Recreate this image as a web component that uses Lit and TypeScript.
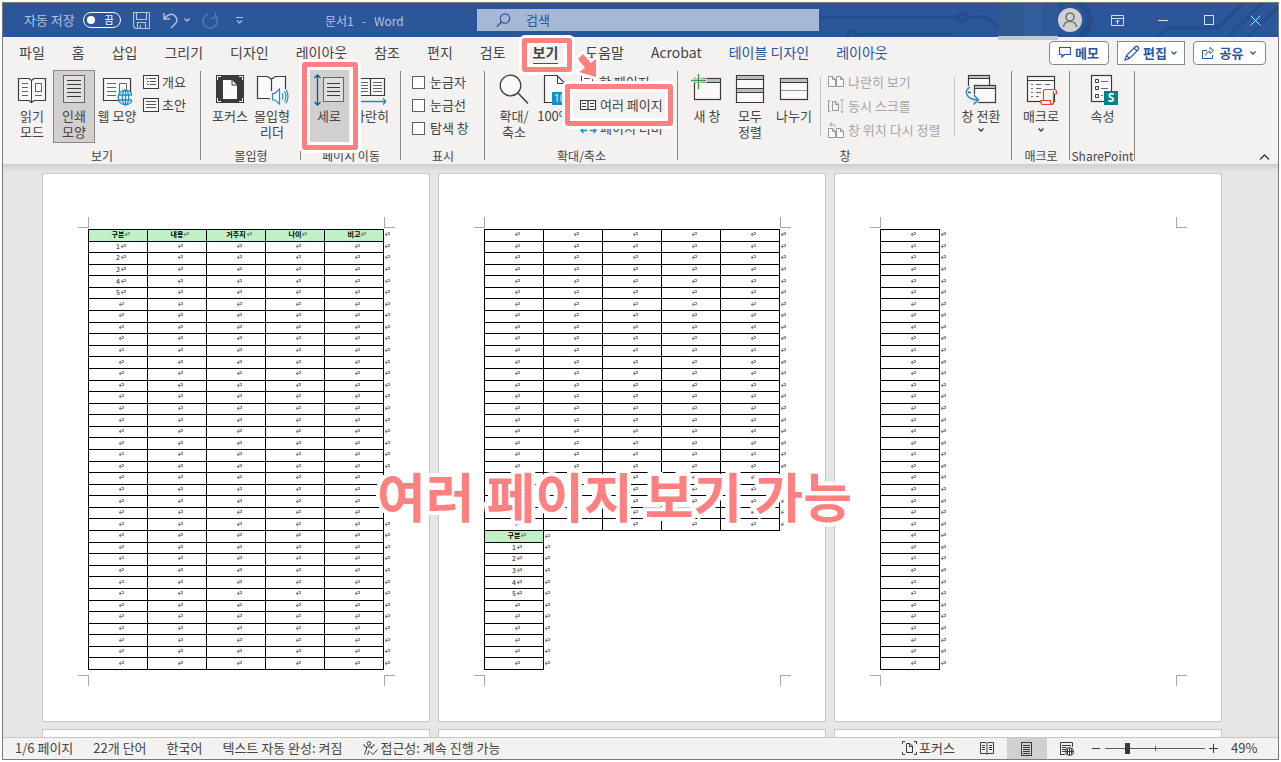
import { LitElement, html, css, svg, nothing, TemplateResult } from "lit";
import { customElement, property, state } from "lit/decorators.js";
import { classMap } from "lit/directives/class-map.js";

const icon = (w: number, h: number, body: unknown) =>
  html`<svg width=${w} height=${h} viewBox="0 0 ${w} ${h}" fill="none" stroke="#3b3a39" stroke-width="1" aria-hidden="true">${body}</svg>`;

const hLines = (x1: number, x2: number, ys: number[], color = "#3b3a39") =>
  ys.map((y) => svg`<path d="M${x1} ${y}H${x2}" stroke=${color}/>`);

const chevron = (color = "#3b3a39") => icon(8, 6, svg`<path d="M1.5 1.5L4 4L6.5 1.5" stroke=${color} stroke-width="1.3"/>`);

const openBook = svg`
  <path d="M1.5 4.500H12L14.500 6.500L17 4.500H28.500V26.500H17L14.500 28.500L12 26.500H1.500Z" fill="#fafafa" stroke-width="1.200"/>
  <path d="M14.500 6V28"/>`;

const icons = {
  read: icon(30, 32, svg`${openBook}${hLines(5, 11, [9.5, 13.5, 17.5, 21.5], "#666")}<rect x="18.500" y="9.500" width="6" height="8" stroke="#666"/>${hLines(18, 25, [21.5], "#666")}`),
  print: icon(32, 32, svg`<rect x="5.500" y="1.500" width="21" height="27" fill="#e0e0e0" stroke="#666"/>${hLines(9, 23, [6.5, 10.5, 14.5, 18.5, 22.5])}`),
  web: icon(30, 32, svg`<path d="M1.500 4.500H28.500V26.500H1.500Z" fill="#fafafa" stroke-width="1.200"/>${hLines(5, 14, [9.5, 13.500, 17.5, 21.5], "#666")}<path d="M17.500 22V9.500H24.500V16" stroke="#666"/>
    <g stroke="#1e8bcd" stroke-width="1.300"><circle cx="23.500" cy="23.500" r="7.300" fill="#fff"/><ellipse cx="23.500" cy="23.500" rx="3.200" ry="7.300"/><path d="M23.500 16V31M16 21H31M16 26H31"/></g>`),
  outline: icon(16, 14, svg`<rect x=".5" y=".5" width="15" height="13" fill="#fafafa"/><path d="M3 3.500h2M6 3.500h7M4 6.500h2M7 6.500h6M4 9.500h2M7 9.500h6" stroke="#555"/>`),
  draft: icon(16, 14, svg`<rect x=".5" y=".5" width="15" height="13" fill="#fafafa"/>${hLines(3, 13, [3.5, 6.5, 9.5], "#555")}`),
  focus: icon(32, 32, svg`<rect x="2" y="1" width="28" height="28" fill="#3b3a39" stroke="none"/><path d="M9 6H18L23 11V25H9Z" fill="#fafafa" stroke="none"/><path d="M18 6V11H23" /><path d="M3.500 6V2.500H7M25 2.500H28.500V6M28.500 24V27.500H25M7 27.500H3.500V24" stroke="#fff"/>`),
  reader: icon(34, 32, svg`<path d="M15 25L13 24.500H2.500V2.500H12.500L16.500 5L20.500 2.500H30.500V15M16.500 5V17" fill="#fafafa" stroke-width="1.200"/>
    <path d="M24.500 15V30L20 26H17.500V19.500H20Z" fill="#fff" stroke="#1e8bcd" stroke-width="1.200"/><path d="M27 19.500Q29 22.500 27 25.500M29.500 17.500Q32.500 22.500 29.500 27.500M31 15.500Q35 22.500 31 29.500" stroke="#1e8bcd" stroke-width="1.100"/>`),
  vertical: icon(32, 34, svg`<path d="M4.500 1V31M1.500 4L4.500 1L7.500 4M1.500 28L4.500 31L7.500 28" stroke="#0a5ea8" stroke-width="1.400"/><rect x="10.500" y="3.500" width="20" height="24" fill="#e0e0e0" stroke="#666"/>${hLines(14, 27, [9.5, 13.5, 17.5, 21.5])}`),
  side: icon(30, 34, svg`<path d="M1.500 4.500H28.500V21.500H1.500ZM14.500 4.500V21.500" fill="#fafafa" stroke-width="1.200"/>${hLines(4, 12, [8.5, 11.5, 14.5, 17.5], "#666")}${hLines(17, 26, [8.5, 11.5, 14.5, 17.5], "#666")}<path d="M1 27.500H30M27 24.500L30 27.500L27 30.500" stroke="#1e8bcd" stroke-width="1.300"/>`),
  zoom: icon(32, 32, svg`<circle cx="12.500" cy="11.500" r="10.300" fill="#fafafa" stroke-width="1.200"/><path d="M20 19L30 29.500" stroke-width="1.400"/>`),
  hundred: icon(32, 32, svg`<path d="M6.500 28.500V1.500H19L27.500 10V28.500Z" fill="#fafafa" stroke-width="1.200"/><path d="M19.500 1.500V9.500H27" /><rect x="14" y="18" width="18" height="13" fill="#1e8bcd" stroke="none"/><text x="16" y="28" font-size="10" fill="#fff" stroke="none" font-family="Open Sans, sans-serif">100</text>`),
  onePage: icon(16, 14, svg`<rect x="1.500" y=".5" width="11" height="13" fill="#fafafa"/>${hLines(4, 10, [3.5, 6.5, 9.5], "#555")}`),
  multiPage: icon(17, 12, svg`<path d="M.5 1.500H15.500V10.500H.5ZM8 1.500V10.500" fill="#fafafa" stroke-width="1.200"/>${hLines(2, 6, [4.5, 7.5])}${hLines(10, 14, [4.5, 7.5])}`),
  pageWidth: icon(17, 14, svg`<path d="M1 9.500H7M3.500 7L1 9.500L3.500 12M10 9.500H16M13.500 7L16 9.500L13.500 12" stroke="#1e8bcd" stroke-width="1.300"/><path d="M4.500 5V.5H12.500V5"/>`),
  newWindow: icon(34, 32, svg`<rect x="4.500" y="4.500" width="26" height="21" fill="#fafafa" stroke-width="1.200"/><rect x="5" y="5" width="25" height="3" fill="#bdbdbd" stroke="none"/><path d="M5 8.500H30"/><path d="M8.500 -1V16M1 6.500H17" stroke="#f3f2f1" stroke-width="4"/><path d="M8.500 0V15M1 6.500H16" stroke="#2ea04a" stroke-width="1.400"/>`),
  arrange: icon(30, 32, svg`<path d="M1.500 1.500H28.500V28.500H1.500Z" fill="#fafafa" stroke-width="1.200"/><path d="M2 2H28V5H2ZM2 15H28V18H2Z" fill="#bdbdbd" stroke="none"/>${hLines(1, 29, [5.5, 14.5, 18.5])}`),
  split: icon(30, 32, svg`<rect x="1.500" y="4.500" width="27" height="21" fill="#fafafa" stroke-width="1.200"/><rect x="2" y="5" width="26" height="3" fill="#bdbdbd" stroke="none"/>${hLines(2, 28, [8.5])}${hLines(2, 28, [16.5], "#999")}`),
  sideBySide: icon(17, 14, svg`<path d="M.5 1.500H4.500L7.500 4.500V11.500H.5ZM8.500 1.500H12.500L15.500 4.500V11.500H8.500ZM4.500 1.500V4.500H7.500M12.500 1.500V4.500H15.500" stroke="#999" fill="#fafafa"/>`),
  syncScroll: icon(17, 16, svg`<path d="M2.500 2.500H.5V13.500H2.500M4.500 3.500H8L10.500 6V12.500H4.500ZM7.500 3.500V6.500H10" stroke="#999"/><path d="M14 1V15M12 3L14 1L16 3M12 13L14 15L16 13" stroke="#b5b5b5"/>`),
  resetWindow: icon(17, 16, svg`<path d="M.5 6.500H4.500L7.500 9.500V15.500H.5ZM8.500 6.500H12.500L15.500 9.500V15.500H8.500ZM4.500 6.500V9.500H7.500M12.500 6.500V9.500H15.500" stroke="#999" fill="#fafafa"/><path d="M4 .5L1.500 2.500L4 4.500M1.500 2.500H5Q7.500 2.500 7.500 5" stroke="#aaa"/>`),
  switchWindow: icon(32, 32, svg`<rect x="3.500" y="1.500" width="21" height="17" fill="#fafafa" stroke-width="1.200"/><rect x="4" y="2" width="20" height="2" fill="#bdbdbd" stroke="none"/>${hLines(3, 25, [4.5])}
    <rect x="6" y="9" width="10" height="21" fill="#f3f2f1" stroke="none"/><rect x="9.500" y="11.500" width="21" height="17" fill="#fafafa" stroke-width="1.200"/><rect x="10" y="12" width="20" height="2" fill="#bdbdbd" stroke="none"/>${hLines(9, 31, [14.5])}
    <path d="M5 13C-1 17 0 25 13 26M9 20.500L13.500 26L8.500 31" stroke="#f3f2f1" stroke-width="3.500"/><path d="M5 13C-1 17 0 25 13 26M9 21L13.500 26L8.500 30.500" stroke="#1e8bcd" stroke-width="1.400"/>`),
  macro: icon(32, 32, svg`<rect x="2.500" y="2.500" width="27" height="25" fill="#fafafa" stroke-width="1.200"/>${hLines(3, 29, [6.5])}<path d="M6 10.500H8M6 14.500H8M6 18.500H8M6 22.500H8M11 10.500H16M20 10.500H25M11 14.500H16M11 18.500H16M11 22.500H14" stroke="#666"/>
    <path d="M19.500 15.500H29.500Q31.500 15.500 31.500 18V20H28.500V28.500Q28.500 30.500 26.500 30.500H17.500Q16 30.500 16 28V26.500H25.500V28.500Q25.500 30.500 27 30.500M18.500 26.500V17Q18.500 15.500 20 15.500M28.500 20V17" fill="#f7f3f2" stroke="#e8403a" stroke-width="1.200"/>`),
  props: icon(32, 32, svg`<rect x="4.500" y="1.500" width="20" height="26" fill="#fafafa" stroke-width="1.200"/><path d="M8.500 5.500h3v3h-3zM8.500 12.500h3v3h-3zM8.500 20.500h3v3h-3z" /><path d="M14 7.500H21M14 14.500H21M14 21.500H16" stroke="#666"/><rect x="17" y="17" width="14" height="14" fill="#038387" stroke="none"/><text x="24" y="28" text-anchor="middle" font-size="12" font-weight="700" fill="#fff" stroke="none" font-family="Open Sans, sans-serif">S</text>`),
};

type Big = { icon: TemplateResult; lines: string[]; size?: string; on?: boolean; menu?: boolean };

@customElement("ribbon-button")
class RibbonButton extends LitElement {
  @property({ attribute: false }) item!: Big;
  static styles = css`
    :host { display: flex; }
    button { all: unset; box-sizing: border-box; display: flex; flex-direction: column; align-items: center; gap: 2px; height: 73px; padding-top: 4px; white-space: nowrap; text-align: center; width: 42px; line-height: 16px; }
    .wide { width: 44px; }
    .slim { width: 40px; }
    .narrow { width: 38px; }
    .broad { width: 52px; }
    .icon { height: 32px; display: flex; }
    .on { background: #d2d0ce; box-shadow: inset 0 0 0 1px #8a8886; }
    .flat { background: #d2d0ce; }
    .row { display: block; }
    .chev { display: flex; justify-content: center; align-items: center; height: 12px; }
  `;
  render() {
    const { icon: pic, lines, size, on, menu } = this.item;
    return html`<button class=${classMap({ [size ?? "base"]: true, on: !!on && size !== "slim", flat: !!on && size === "slim" })} aria-pressed=${on ? "true" : "false"}>
      <span class="icon">${pic}</span>
      <span>${lines.map((l) => html`<span class="row">${l}</span>`)}${menu ? html`<span class="chev">${chevron()}</span>` : nothing}</span>
    </button>`;
  }
}

@customElement("doc-page")
class DocPage extends LitElement {
  @property({ type: Number }) full = 0;
  @property({ type: Number }) rows = 38;
  @property({ type: Number }) head = -1;
  static styles = css`
    :host { display: block; box-sizing: border-box; width: 388px; border: 1px solid #c6c6c6; background: #fff; padding: 53px 44px 45px 45px; }
    .body { position: relative; height: 449px; padding-top: 2px; box-sizing: border-box; }
    .corner { position: absolute; box-sizing: border-box; width: 11px; height: 11px; border: 0 solid #a6a6a6; }
    .tl { left: -10px; top: -10px; border-width: 0 1px 1px 0; }
    .tr { right: -10px; top: -10px; border-width: 0 0 1px 1px; }
    .bl { left: -10px; bottom: -10px; border-width: 1px 1px 0 0; }
    .br { right: -10px; bottom: -10px; border-width: 1px 0 0 1px; }
    table { border-collapse: collapse; table-layout: fixed; height: 441px; font-size: 7px; line-height: 8px; color: #222; }
    .col { width: 59px; }
    .end { width: 11px; }
    td, th { padding: 0 0 2px; text-align: center; border: 1px solid #000; }
    th { background: #c0f0c6; color: #000; font-weight: 700; }
    .out { border: none; text-align: left; }
    .mark { display: inline-block; width: 6px; height: 6px; margin-right: -6px; vertical-align: top; margin-top: 1px; }
    .mark path { fill: none; stroke: #7c7c7c; stroke-width: 0.9; }
  `;
  private mark = () => html`<svg class="mark" viewBox="0 0 6 6" aria-hidden="true"><path d="M3.500 1.500H5.500V3.500H1M3 2L1 3.500L3 5"/></svg>`;
  render() {
    const names = ["구분", "내용", "거주지", "나이", "비고"];
    const trs = Array.from({ length: this.rows }, (_, r) => {
      const n = r < this.full ? 5 : 1;
      const k = this.head < 0 ? -1 : r - this.head;
      return html`<tr>${names.slice(0, n).map((name, c) =>
        k === 0 ? html`<th scope="col">${name}${this.mark()}</th>` : html`<td>${c === 0 && k > 0 && k < 6 ? k : ""}${this.mark()}</td>`
      )}<td class="out">${this.mark()}</td></tr>`;
    });
    const cols = this.full ? 5 : 1;
    return html`<div class="body">
      <span class="corner tl"></span><span class="corner tr"></span><span class="corner bl"></span><span class="corner br"></span>
      ${this.rows ? html`<table style="width:${cols * 59 + 12}px"><colgroup>${names.slice(0, cols).map(() => html`<col class="col">`)}<col class="end"></colgroup><tbody>${trs}</tbody></table>` : nothing}
    </div>`;
  }
}

@customElement("app-root")
class AppRoot extends LitElement {
  @state() private tab = 9;

  static styles = css`
    :host { display: block; position: relative; box-sizing: border-box; height: 100vh; padding: 2px; background: #fff; overflow: hidden; color: #444; font: 13px/16px "Noto Sans CJK KR", sans-serif; }
    * { box-sizing: border-box; }
    button { all: unset; box-sizing: border-box; }
    svg { display: block; flex: none; }
    .window { display: flex; flex-direction: column; height: 100%; border: 1px solid #7a7a7a; }

    .title { position: relative; display: grid; grid-template-columns: 322px 152px minmax(200px, 342px) 1fr; align-items: center; height: 34px; flex: none; background: #2b579a; color: #b3c4de; }
    .circuit { position: absolute; right: 0; top: 0; }
    .quick { display: flex; align-items: center; padding-left: 21px; white-space: nowrap; }
    .toggle { display: flex; align-items: center; justify-content: space-between; width: 38px; height: 16px; margin: 0 12px 0 8px; padding: 0 6px 0 3px; border: 1px solid #fff; border-radius: 8px; color: #fff; font-size: 10px; line-height: 12px; }
    .knob { width: 8px; height: 8px; border-radius: 50%; background: #fff; }
    .quick .undo { margin-left: 12px; }
    .quick .drop { margin: 0 11px 0 4px; }
    .quick .more { margin-left: 16px; }
    .name { display: flex; gap: 8px; font-size: 12px; padding-top: 2px; }
    .search { position: relative; display: flex; align-items: center; gap: 15px; height: 22px; padding-left: 19px; background: #a5b8d5; color: #2b579a; }
    .search input { all: unset; flex: 1; min-width: 0; color: #2b579a; }
    .search input::placeholder { color: #2b579a; opacity: 1; }
    .sys { position: relative; display: flex; justify-content: flex-end; align-items: center; height: 34px; }
    .account { align-self: flex-start; width: 60px; height: 37px; background: linear-gradient(90deg, #2f5893 0 26px, #325d9c 26px 44px, #2d5998 44px); border-bottom: 4px solid #bfc9de; }
    .avatar { display: flex; width: 24px; height: 24px; margin-right: 12px; border-radius: 50%; background: #d0d0d0; }
    .sysbtn { display: flex; justify-content: center; width: 46px; }

    .tabs { display: flex; align-items: center; height: 31px; flex: none; padding: 0 12px 0 16px; background: #f3f2f1; font-size: 14px; line-height: 18px; white-space: nowrap; }
    .tablist { display: flex; gap: 27px; flex: 1; }
    .tab { padding: 3px 0 2px; border-bottom: 2px solid transparent; }
    .tab.on { font-weight: 700; border-color: #2b579a; }
    .tab.context { color: #2b579a; }
    .actions { display: flex; gap: 8px; color: #2b579a; font-size: 13px; font-weight: 700; }
    .action { display: flex; align-items: center; justify-content: center; gap: 4px; height: 24px; border: 1px solid #8a8886; background: #fff; }
    .memo { width: 60px; border-radius: 4px; }
    .edit { width: 68px; gap: 3px; }
    .share { width: 73px; border-radius: 4px; gap: 6px; }

    .ribbon { position: relative; display: flex; height: 96px; flex: none; padding-top: 2px; background: #f3f2f1; }
    .group { position: relative; display: flex; flex-direction: column; flex: none; padding-left: 8px; }
    .group::after { content: ""; position: absolute; right: 0; top: 1px; height: 89px; width: 1px; background: #8a8886; }
    .g-view { width: 198px; } .g-read { width: 100px; } .g-move { width: 100px; } .g-show { width: 84px; }
    .g-zoom { width: 193px; } .g-win { width: 334px; } .g-macro { width: 58px; } .g-sp { width: 65px; }
    .g-macro, .g-sp { padding-left: 0; align-items: center; }
    .items { display: flex; height: 78px; }
    .label { align-self: stretch; margin-left: -8px; text-align: center; font-size: 12px; line-height: 16px; white-space: nowrap; }
    .g-macro .label, .g-sp .label { margin-left: 0; }
    .col { display: flex; flex-direction: column; gap: 7px; padding-top: 4px; }
    .small { display: flex; align-items: center; gap: 3px; height: 16px; white-space: nowrap; }
    .off { color: #a6a6a6; }
    .g-view .col { padding-left: 4px; }
    .g-zoom .col { padding-left: 7px; }
    .g-show .col { padding-left: 3px; }
    .g-win .rule { width: 1px; height: 60px; margin-top: 7px; background: #c8c6c4; }
    .g-win .first { margin-left: 4px; }
    .g-win .col { padding-left: 7px; gap: 8px; width: 133px; }
    .check { gap: 5px; }
    .check input { appearance: none; width: 13px; height: 13px; margin: 0; border: 1px solid #605e5c; background: #fff; }
    .collapse { position: absolute; right: 8px; bottom: 3px; }

    .canvas { flex: 1; min-height: 0; overflow: hidden; display: grid; grid-template-columns: repeat(3, 388px); gap: 7px 8px; justify-content: center; align-content: start; padding: 9px 17px 0 0; background: linear-gradient(#cfcfcf, #e6e6e6 8px); }

    .status { display: flex; align-items: center; height: 22px; flex: none; border-top: 1px solid #c6c6c6; background: #f3f2f1; padding: 0 21px 0 12px; white-space: nowrap; font-size: 13px; }
    .facts { display: flex; gap: 20px; flex: 1; }
    .facts, .focus, .percent { padding-bottom: 1px; }
    .with-icon { display: flex; align-items: center; gap: 2px; }
    .view { display: flex; align-items: center; justify-content: center; width: 40px; height: 21px; }
    .view.on { background: #d2d0ce; }
    .focus { margin-right: 12px; }
    .zoomer { display: flex; align-items: center; gap: 4px; padding-left: 5px; }
    .zoomer input { appearance: none; width: 100px; height: 11px; margin: 0; background: linear-gradient(#605e5c, #605e5c) 0 5px / 100% 1px no-repeat, linear-gradient(#605e5c, #605e5c) 50px 3px / 1px 5px no-repeat; }
    .zoomer input::-webkit-slider-thumb { appearance: none; width: 5px; height: 11px; background: #3b3a39; }
    .percent { margin-left: 9px; width: 26px; }

    .callout { position: absolute; border: 5px solid #ff8080; border-radius: 3px; box-shadow: 0 0 0 3px #fff, inset 0 0 0 3px #fff; pointer-events: none; }
    .c-tab { left: 522px; top: 38px; width: 50px; height: 34px; }
    .c-vertical { left: 302px; top: 62px; width: 56px; height: 88px; }
    .c-multi { left: 565px; top: 84px; width: 108px; height: 42px; }
    .arrow { position: absolute; left: 570px; top: 46px; pointer-events: none; }
    .caption { position: absolute; left: 377px; top: 460px; font-size: 53px; line-height: 70px; font-weight: 700; color: #ff8080; white-space: nowrap; -webkit-text-stroke: 8px #fff; paint-order: stroke fill; pointer-events: none; }
  `;

  private small(pic: TemplateResult, text: string, off = false) {
    return html`<button class=${classMap({ small: true, off })} ?disabled=${off}>${pic}<span>${text}</span></button>`;
  }

  private group(cls: string, label: string, content: unknown) {
    return html`<section class="group ${cls}" aria-label=${label}><div class="items">${content}</div><div class="label">${label}</div></section>`;
  }

  private big(...items: Big[]) {
    return items.map((i) => html`<ribbon-button .item=${i}></ribbon-button>`);
  }

  private titleBar() {
    const c = "#b3c4de";
    return html`<header class="title">
      <svg class="circuit" width="460" height="34" fill="none" stroke="#254d8a" stroke-width="3" aria-hidden="true">
        <path d="M0 14H141M149 14H162Q170 14 178 22L184 28M38 31H135"/><circle cx="145" cy="14" r="4"/><circle cx="34" cy="32" r="4"/>
        <circle cx="251" cy="17" r="20" stroke-width="7"/><path d="M340 34L350 25H400L425 0M410 34L444 0M430 34L462 2"/>
      </svg>
      <div class="quick">
        <span>자동 저장</span>
        <button class="toggle" role="switch" aria-checked="false" aria-label="자동 저장"><span class="knob"></span><span>끔</span></button>
        ${icon(17, 17, svg`<path d="M.5 .5H16.500V16.500H2.500L.5 14.500ZM3.500 .5V7.500H13.500V.5M4.500 16V10.500H12.500V16M7.500 13V16" stroke=${c} stroke-width="1.200"/>`)}
        <span class="undo">${icon(17, 17, svg`<path d="M2 1V7H8M2 7C6 2 10 1 13 4C16 7 15 10 13 12L9 16" stroke=${c} stroke-width="1.400"/>`)}</span>
        <span class="drop">${chevron(c)}</span>
        ${icon(17, 17, svg`<path d="M13.500 1V6M13.500 6H9M13 3.500A7.200 7.200 0 1 1 6 2" stroke="#557bb4" stroke-width="1.400"/>`)}
        <span class="more">${icon(9, 9, svg`<path d="M1 1.500H8M2 4.500L4.500 7L7 4.500" stroke=${c} stroke-width="1.200"/>`)}</span>
      </div>
      <div class="name"><span>문서1</span><span>-</span><span>Word</span></div>
      <label class="search">${icon(15, 15, svg`<circle cx="9" cy="5.500" r="4.700" stroke="#2b579a" stroke-width="1.200"/><path d="M5.500 9L.8 13.800" stroke="#2b579a" stroke-width="1.300"/>`)}<input type="text" placeholder="검색" aria-label="검색"></label>
      <div class="sys">
        <span class="account"></span>
        <button class="avatar" aria-label="계정">${icon(24, 24, svg`<circle cx="12" cy="9" r="4" stroke="#555" stroke-width="1.200"/><path d="M5.500 19Q6 13.500 12 13.500Q18 13.500 18.500 19" stroke="#555" stroke-width="1.200"/>`)}</button>
        <button class="sysbtn" aria-label="리본 표시 옵션">${icon(13, 11, svg`<path d="M.5 .5H12.500V10.500H.5ZM.5 3.500H12.500M6.500 9V5M4.500 7L6.500 5L8.500 7" stroke="#d5deec"/>`)}</button>
        <button class="sysbtn" aria-label="최소화">${icon(11, 11, svg`<path d="M0 5.500H10" stroke="#d5deec"/>`)}</button>
        <button class="sysbtn" aria-label="최대화">${icon(11, 11, svg`<rect x=".5" y=".5" width="9" height="9" stroke="#d5deec"/>`)}</button>
        <button class="sysbtn" aria-label="닫기">${icon(11, 11, svg`<path d="M.5 .5L10.500 10.500M10.500 .5L.5 10.500" stroke="#d5deec"/>`)}</button>
      </div>
    </header>`;
  }

  private tabRow() {
    const names = ["파일", "홈", "삽입", "그리기", "디자인", "레이아웃", "참조", "편지", "검토", "보기", "도움말", "Acrobat", "테이블 디자인", "레이아웃"];
    const b = "#2b579a";
    return html`<nav class="tabs">
      <div class="tablist" role="tablist">${names.map((n, i) => html`<button role="tab" aria-selected=${i === this.tab ? "true" : "false"} class=${classMap({ tab: true, on: i === this.tab, context: i > 11 })} @click=${() => (this.tab = i)}>${n}</button>`)}</div>
      <div class="actions">
        <button class="action memo">${icon(12, 11, svg`<path d="M.5 .5H11.500V7.500H5.500L3 10V7.500H.5Z" stroke=${b} stroke-width="1.200"/>`)}메모</button>
        <button class="action edit">${icon(16, 16, svg`<path d="M1 15L2.500 10.500L11 2Q12.500 .5 14 2Q15.500 3.500 14 5L5.500 13.500ZM2.500 10.500L5.500 13.500M10 3L13 6" stroke=${b} stroke-width="1.200"/>`)}편집${chevron(b)}</button>
        <button class="action share">${icon(12, 12, svg`<path d="M5 3.500H.5V11.500H10.500V8M3.500 8.500Q4 4.500 8 4.500V6.500L11.500 3.500L8 .5V2.500" stroke=${b}/>`)}공유 ${chevron(b)}</button>
      </div>
    </nav>`;
  }

  private ribbon() {
    return html`<div class="ribbon">
      ${this.group("g-view", "보기", html`
        ${this.big({ icon: icons.read, lines: ["읽기", "모드"] }, { icon: icons.print, lines: ["인쇄", "모양"], on: true }, { icon: icons.web, lines: ["웹 모양"], size: "wide" })}
        <div class="col">${this.small(icons.outline, "개요")}${this.small(icons.draft, "초안")}</div>`)}
      ${this.group("g-read", "몰입형", this.big({ icon: icons.focus, lines: ["포커스"] }, { icon: icons.reader, lines: ["몰입형", "리더"] }))}
      ${this.group("g-move", "페이지 이동", this.big({ icon: icons.vertical, lines: ["세로"], size: "slim", on: true }, { icon: icons.side, lines: ["나란히"], size: "wide" }))}
      ${this.group("g-show", "표시", html`<div class="col">${["눈금자", "눈금선", "탐색 창"].map((t) => html`<label class="small check"><input type="checkbox">${t}</label>`)}</div>`)}
      ${this.group("g-zoom", "확대/축소", html`
        ${this.big({ icon: icons.zoom, lines: ["확대/", "축소"] }, { icon: icons.hundred, lines: ["100%"], size: "narrow" })}
        <div class="col">${this.small(icons.onePage, "한 페이지")}${this.small(icons.multiPage, "여러 페이지")}${this.small(icons.pageWidth, "페이지 너비")}</div>`)}
      ${this.group("g-win", "창", html`
        ${this.big({ icon: icons.newWindow, lines: ["새 창"] }, { icon: icons.arrange, lines: ["모두", "정렬"], size: "wide" }, { icon: icons.split, lines: ["나누기"], size: "wide" })}
        <span class="rule first"></span>
        <div class="col">${this.small(icons.sideBySide, "나란히 보기", true)}${this.small(icons.syncScroll, "동시 스크롤", true)}${this.small(icons.resetWindow, "창 위치 다시 정렬", true)}</div>
        <span class="rule"></span>
        ${this.big({ icon: icons.switchWindow, lines: ["창 전환"], size: "broad", menu: true })}`)}
      ${this.group("g-macro", "매크로", this.big({ icon: icons.macro, lines: ["매크로"], menu: true }))}
      ${this.group("g-sp", "SharePoint", this.big({ icon: icons.props, lines: ["속성"] }))}
      <button class="collapse" aria-label="리본 메뉴 축소">${icon(11, 8, svg`<path d="M1 6.500L5.500 2L10 6.500" stroke-width="1.300"/>`)}</button>
    </div>`;
  }

  private statusBar() {
    return html`<footer class="status">
      <div class="facts">
        <span>1/6 페이지</span><span>22개 단어</span><span>한국어</span><span>텍스트 자동 완성: 켜짐</span>
        <span class="with-icon">${icon(16, 15, svg`<circle cx="7" cy="2.500" r="1.800"/><path d="M2 3Q1 5 4.500 6V8L2.500 13.500M12 3Q13 5 9.500 6V8M4.500 6H9.500M7 9.500L5.500 14M8 10.500L11 13.500L15.500 8.500"/>`)}접근성: 계속 진행 가능</span>
      </div>
      <button class="with-icon focus">${icon(15, 14, svg`<path d="M3 .5H.5V3M.5 11V13.500H3M12 .5H14.500V3M14.500 11V13.500H12M4.500 2.500H8L10.500 5V11.500H4.500ZM7.500 2.500V5.500H10.500"/>`)}포커스</button>
      <button class="view" aria-label="읽기 모드">${icon(14, 13, svg`<path d="M.5 .5H6L7 1.500L8 .5H13.500V11.500H8L7 12.500L6 11.500H.5ZM7 1.500V12.500"/>${hLines(2, 5, [3.5, 5.5, 7.5])}${hLines(9, 12, [3.5, 5.5, 7.5])}`)}</button>
      <button class="view on" aria-label="인쇄 모양">${icon(12, 14, svg`<rect x=".5" y=".5" width="10" height="13"/>${hLines(2, 9, [3.5, 5.5, 7.5, 9.5, 11.5])}`)}</button>
      <button class="view" aria-label="웹 모양">${icon(14, 14, svg`<path d="M.5 13V.5H12.500V5M0 12.500H5"/>${hLines(2, 11, [3.5])}${hLines(2, 6, [5.5, 7.5, 9.5])}<circle cx="9.500" cy="9.500" r="4"/><path d="M5.500 9.500H13.500M9.500 5.500V13.500M7.500 6.500V12.500M11.500 6.500V12.500"/>`)}</button>
      <div class="zoomer">
        <button aria-label="축소">${icon(9, 9, svg`<path d="M0 4.500H8"/>`)}</button>
        <input type="range" min="0" max="100" value="21" aria-label="확대/축소">
        <button aria-label="확대">${icon(9, 9, svg`<path d="M0 4.500H9M4.500 0V9"/>`)}</button>
        <span class="percent">49%</span>
      </div>
    </footer>`;
  }

  render() {
    return html`<div class="window">
        ${this.titleBar()}${this.tabRow()}${this.ribbon()}
        <main class="canvas">
          <doc-page .full=${38} .head=${0}></doc-page>
          <doc-page .full=${26} .head=${26}></doc-page>
          <doc-page></doc-page>
          <doc-page .rows=${0}></doc-page><doc-page .rows=${0}></doc-page><doc-page .rows=${0}></doc-page>
        </main>
        ${this.statusBar()}
      </div>
      <div class="callout c-vertical"></div>
      <div class="callout c-tab"></div>
      <svg class="arrow" width="34" height="40" aria-hidden="true"><path d="M13 8L21 17L26 13V31L9 26L15 22L8 13Z" fill="#ff8080" stroke="#fff" stroke-width="6" stroke-linejoin="round" paint-order="stroke"/></svg>
      <div class="callout c-multi"></div>
      <div class="caption">여러 페이지 보기 가능</div>`;
  }
}
